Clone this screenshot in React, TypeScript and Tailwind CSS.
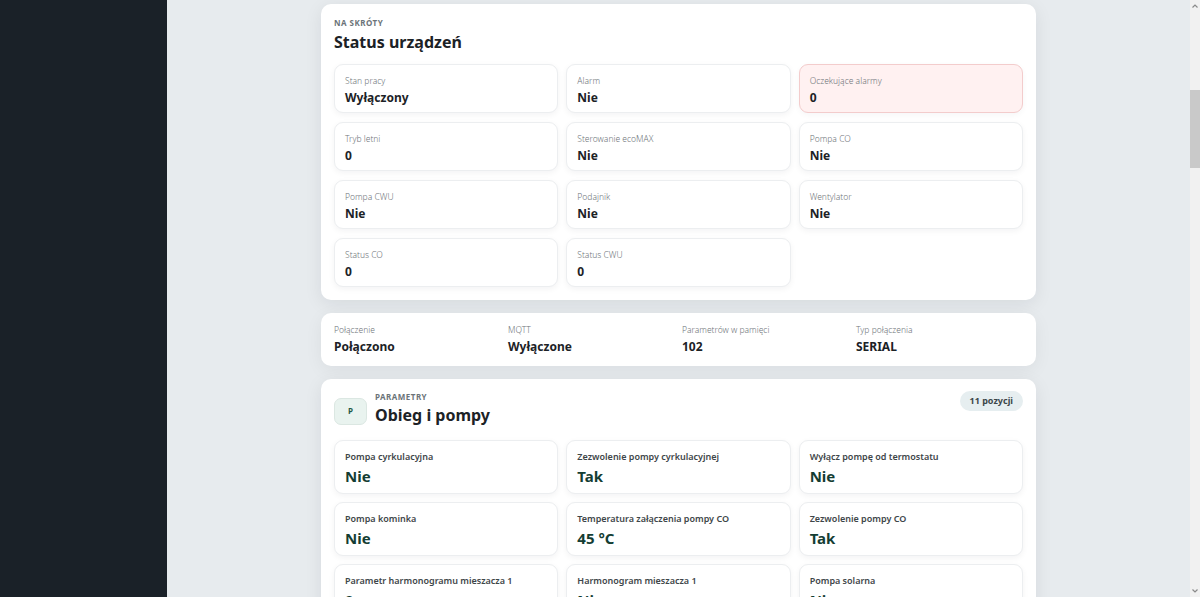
import React from "react";

const font = { fontFamily: '"Noto Sans", "Open Sans", sans-serif' };

type Stat = { label: string; value: string; alert?: boolean };

const stats: Stat[] = [
  { label: "Stan pracy", value: "Wyłączony" },
  { label: "Alarm", value: "Nie" },
  { label: "Oczekujące alarmy", value: "0", alert: true },
  { label: "Tryb letni", value: "0" },
  { label: "Sterowanie ecoMAX", value: "Nie" },
  { label: "Pompa CO", value: "Nie" },
  { label: "Pompa CWU", value: "Nie" },
  { label: "Podajnik", value: "Nie" },
  { label: "Wentylator", value: "Nie" },
  { label: "Status CO", value: "0" },
  { label: "Status CWU", value: "0" },
];

const conn = [
  { label: "Połączenie", value: "Połączono" },
  { label: "MQTT", value: "Wyłączone" },
  { label: "Parametrów w pamięci", value: "102" },
  { label: "Typ połączenia", value: "SERIAL" },
];

const params = [
  { label: "Pompa cyrkulacyjna", value: "Nie" },
  { label: "Zezwolenie pompy cyrkulacyjnej", value: "Tak" },
  { label: "Wyłącz pompę od termostatu", value: "Nie" },
  { label: "Pompa kominka", value: "Nie" },
  { label: "Temperatura załączenia pompy CO", value: "45 °C" },
  { label: "Zezwolenie pompy CO", value: "Tak" },
  { label: "Parametr harmonogramu mieszacza 1", value: "0" },
  { label: "Harmonogram mieszacza 1", value: "Nie" },
  { label: "Pompa solarna", value: "Nie" },
  { label: "Pompa obiegowa", value: "Nie" },
  { label: "Tryb pompy", value: "0" },
];

export default function App() {
  return (
    <div className="flex h-[597px] w-[1200px] overflow-hidden bg-[#e7ebee]" style={font}>
      <aside className="w-[167px] shrink-0 bg-[#1a2128]" />
      <main className="flex flex-1 flex-col items-center gap-[13px] overflow-hidden pt-[4px]">
        {/* Status card */}
        <section className="w-[715px] shrink-0 rounded-[10px] bg-white px-[13px] pb-[13px] pt-[14px] shadow-[0_4px_18px_rgba(15,23,42,0.08)]">
          <div className="text-[8px] font-bold uppercase leading-[10px] tracking-[0.06em] text-[#6b7378]">Na skróty</div>
          <h2 className="mt-[3px] text-[16px] font-bold leading-[22px] text-[#1c2226]">Status urządzeń</h2>
          <div className="mt-[11px] grid grid-cols-3 gap-x-[8px] gap-y-[9px]">
            {stats.map((s) => (
              <div
                key={s.label}
                className={
                  s.alert
                    ? "h-[49px] rounded-[9px] border border-[#f3cccc] bg-[#fff1f1] px-[10px] pt-[10px] shadow-[0_2px_6px_rgba(15,23,42,0.04)]"
                    : "h-[49px] rounded-[9px] border border-[#eceef0] bg-white px-[10px] pt-[10px] shadow-[0_2px_6px_rgba(15,23,42,0.05)]"
                }
              >
                <div className="text-[8.5px] font-light leading-[12px] text-[#6e7479]">{s.label}</div>
                <div className="mt-[3px] text-[12px] font-bold leading-[16px] text-[#1c2226]">{s.value}</div>
              </div>
            ))}
          </div>
        </section>

        {/* Connection card */}
        <section className="grid w-[715px] shrink-0 grid-cols-4 gap-x-[7px] rounded-[10px] bg-white px-[13px] pb-[11px] pt-[11px] shadow-[0_4px_18px_rgba(15,23,42,0.06)]">
          {conn.map((c) => (
            <div key={c.label}>
              <div className="text-[8.5px] font-light leading-[12px] text-[#6e7479]">{c.label}</div>
              <div className="mt-[3px] text-[12px] font-bold leading-[16px] text-[#1c2226]">{c.value}</div>
            </div>
          ))}
        </section>

        {/* Parameters card */}
        <section className="w-[715px] shrink-0 rounded-[10px] bg-white px-[13px] pb-[13px] pt-[12px] shadow-[0_4px_18px_rgba(15,23,42,0.08)]">
          <div className="flex items-start justify-between">
            <div className="flex items-center gap-[8px] pt-[5px]">
              <div className="flex h-[27px] w-[33px] items-center justify-center rounded-[7px] border border-[#dbe7e2] bg-[#e9f3ef] text-[8px] font-bold text-[#1f5a47]">
                P
              </div>
              <div className="-mt-[4px]">
                <div className="text-[8px] font-bold uppercase leading-[10px] tracking-[0.06em] text-[#6b7378]">Parametry</div>
                <div className="mt-[2px] text-[16px] font-bold leading-[22px] text-[#1c2226]">Obieg i pompy</div>
              </div>
            </div>
            <div className="flex h-[20px] items-center rounded-full bg-[#e6eef0] px-[10px] text-[9px] font-bold leading-[12px] text-[#3c4649]">11 pozycji</div>
          </div>
          <div className="mt-[14px] grid grid-cols-3 gap-x-[8px] gap-y-[8px]">
            {params.map((p) => (
              <div
                key={p.label}
                className="h-[54px] rounded-[9px] border border-[#eceef0] bg-white px-[10px] pt-[10px] shadow-[0_2px_6px_rgba(15,23,42,0.05)]"
              >
                <div className="text-[9px] font-semibold leading-[12px] text-[#3e4649]">{p.label}</div>
                <div className="mt-[3px] text-[15px] font-bold leading-[20px] text-[#143d33]">{p.value}</div>
              </div>
            ))}
          </div>
        </section>
      </main>
      {/* Scrollbar */}
      <div className="flex w-[10px] shrink-0 flex-col items-center bg-[#f1f1f1]">
        <svg width="8" height="8" viewBox="0 0 8 8" className="mt-[2px]">
          <path d="M1.5 5.5 L4 3 L6.5 5.5" fill="none" stroke="#8a8a8a" strokeWidth="1.2" />
        </svg>
        <div className="mt-[80px] h-[78px] w-[10px] bg-[#c9c9c9]" />
        <div className="flex-1" />
        <svg width="8" height="8" viewBox="0 0 8 8" className="mb-[2px]">
          <path d="M1.5 2.5 L4 5 L6.5 2.5" fill="none" stroke="#8a8a8a" strokeWidth="1.2" />
        </svg>
      </div>
    </div>
  );
}
